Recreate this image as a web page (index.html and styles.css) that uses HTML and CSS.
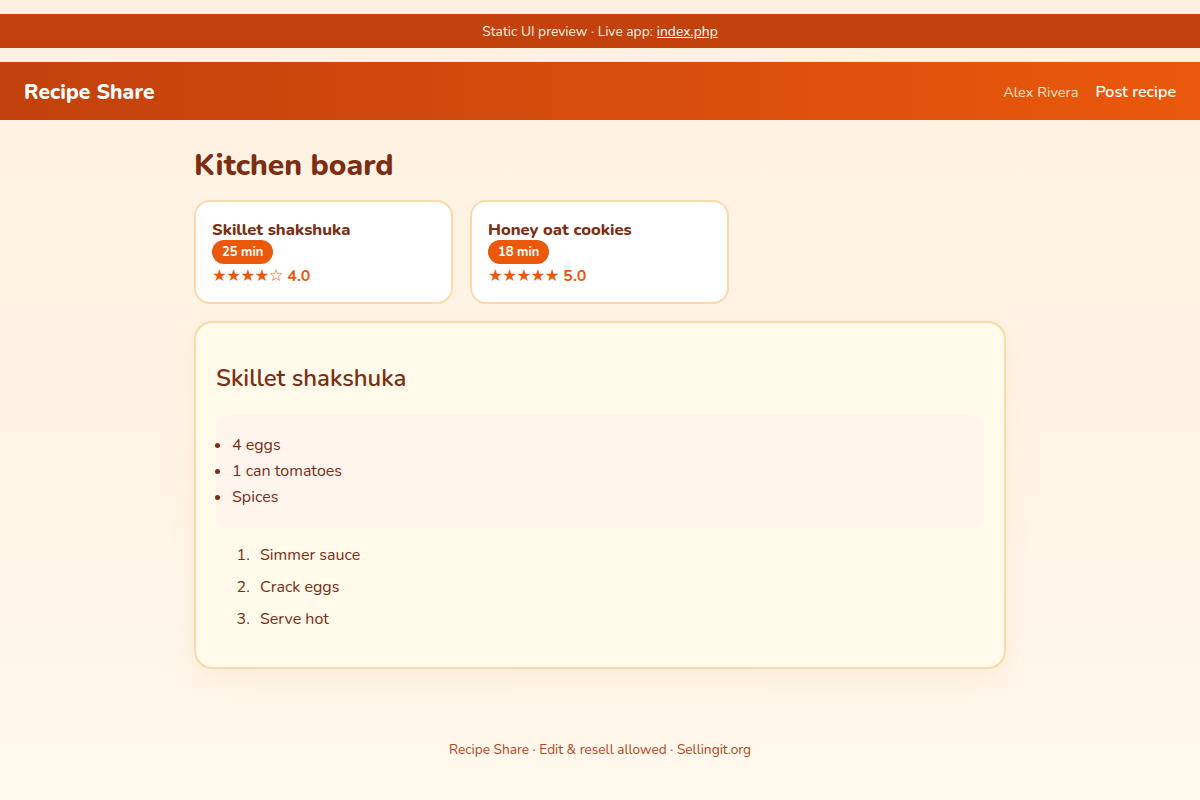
FILE: index.html
```html
<!DOCTYPE html>
<html lang="en">
<head>
<meta charset="utf-8">
<title>Recipe Share</title>
<link rel="stylesheet" href="styles.css">
</head>
<body>
<div class="preview-bar">Static UI preview · Live app: <a href="#">index.php</a></div>
<header class="site-header">
  <div class="brand">Recipe Share</div>
  <nav class="nav">
    <span class="user">Alex Rivera</span>
    <a class="post" href="#">Post recipe</a>
  </nav>
</header>
<main class="main">
  <h1 class="page-title">Kitchen board</h1>
  <div class="cards">
    <article class="card">
      <h3 class="card-title">Skillet shakshuka</h3>
      <span class="badge">25 min</span>
      <div class="rating"><span class="stars">★★★★☆</span> 4.0</div>
    </article>
    <article class="card">
      <h3 class="card-title">Honey oat cookies</h3>
      <span class="badge">18 min</span>
      <div class="rating"><span class="stars">★★★★★</span> 5.0</div>
    </article>
  </div>
  <section class="detail">
    <h2 class="detail-title">Skillet shakshuka</h2>
    <ul class="ingredients">
      <li>4 eggs</li>
      <li>1 can tomatoes</li>
      <li>Spices</li>
    </ul>
    <ol class="steps">
      <li>Simmer sauce</li>
      <li>Crack eggs</li>
      <li>Serve hot</li>
    </ol>
  </section>
</main>
<footer class="footer">Recipe Share · Edit &amp; resell allowed · Sellingit.org</footer>
</body>
</html>
```
FILE: styles.css
```css
* { box-sizing: border-box; }
html, body { margin: 0; padding: 0; }
body {
  font-family: "Nunito", "Lato", "Noto Sans", sans-serif;
  color: #7c2d12;
  background: linear-gradient(180deg, #fff1e0 0%, #fff8ec 100%);
  min-height: 800px;
  padding-top: 14px;
}
.preview-bar {
  height: 34px;
  background: #c2410c;
  color: #fff3e6;
  font-size: 13.8px;
  display: flex;
  align-items: center;
  justify-content: center;
  gap: 4px;
}
.preview-bar a { color: #fff; text-decoration: underline; }
.site-header {
  margin-top: 14px;
  height: 58px;
  background: linear-gradient(90deg, #c2410c 0%, #ea580c 100%);
  display: flex;
  align-items: center;
  justify-content: space-between;
  padding: 2px 24px 0;
  color: #fff;
}
.brand { font-size: 21px; font-weight: 800; letter-spacing: 0.1px; }
.nav { display: flex; align-items: center; gap: 17px; }
.user { font-size: 14.6px; color: #ffe6d2; }
.post { font-size: 16px; font-weight: 600; color: #fff; text-decoration: none; }
.main { width: 812px; margin: 0 auto; padding-top: 27px; }
.page-title { margin: 0 0 15px; font-size: 30px; font-weight: 800; line-height: 38px; color: #7c2d12; }
.cards { display: flex; gap: 17px; }
.card {
  width: 259px;
  height: 104px;
  background: #fff;
  border: 2px solid #fed7aa;
  border-radius: 16px;
  padding: 18px 16px 0;
  display: flex;
  flex-direction: column;
  align-items: flex-start;
}
.card-title { margin: 0; font-size: 16.6px; font-weight: 800; line-height: 20px; color: #7c2d12; }
.badge {
  background: #ea580c;
  color: #fff;
  font-size: 13px;
  font-weight: 700;
  height: 24px;
  line-height: 24px;
  padding: 0 10px;
  border-radius: 12px;
}
.rating { margin-top: 1px; font-size: 16px; font-weight: 700; color: #ea580c; line-height: 22px; }
.stars { font-family: "DejaVu Sans", sans-serif; font-size: 16.5px; letter-spacing: -0.6px; }
.detail {
  margin-top: 17px;
  background: #fffaea;
  border: 2px solid #fed7aa;
  border-radius: 18px;
  padding: 20px 20px 20px;
  box-shadow: 0 10px 28px rgba(234, 88, 12, 0.08);
}
.detail-title { margin: 19px 0 21px; font-size: 24px; font-weight: 600; line-height: 32px; color: #7c2d12; }
.ingredients {
  margin: 0;
  background: #fff5ec;
  border-radius: 12px;
  padding: 17px 16px 18px;
  list-style: disc;
  font-size: 16px;
  line-height: 26px;
  color: #7c2d12;
}
.steps {
  margin: 15px 0 16px;
  padding-left: 38px;
  font-size: 16px;
  line-height: 24px;
  color: #7c2d12;
}
.steps li { margin-bottom: 8px; padding-left: 6px; }
.steps li:last-child { margin-bottom: 0; }
.footer {
  text-align: center;
  font-size: 13.7px;
  color: #b9441a;
  margin-top: 71px;
}
```
